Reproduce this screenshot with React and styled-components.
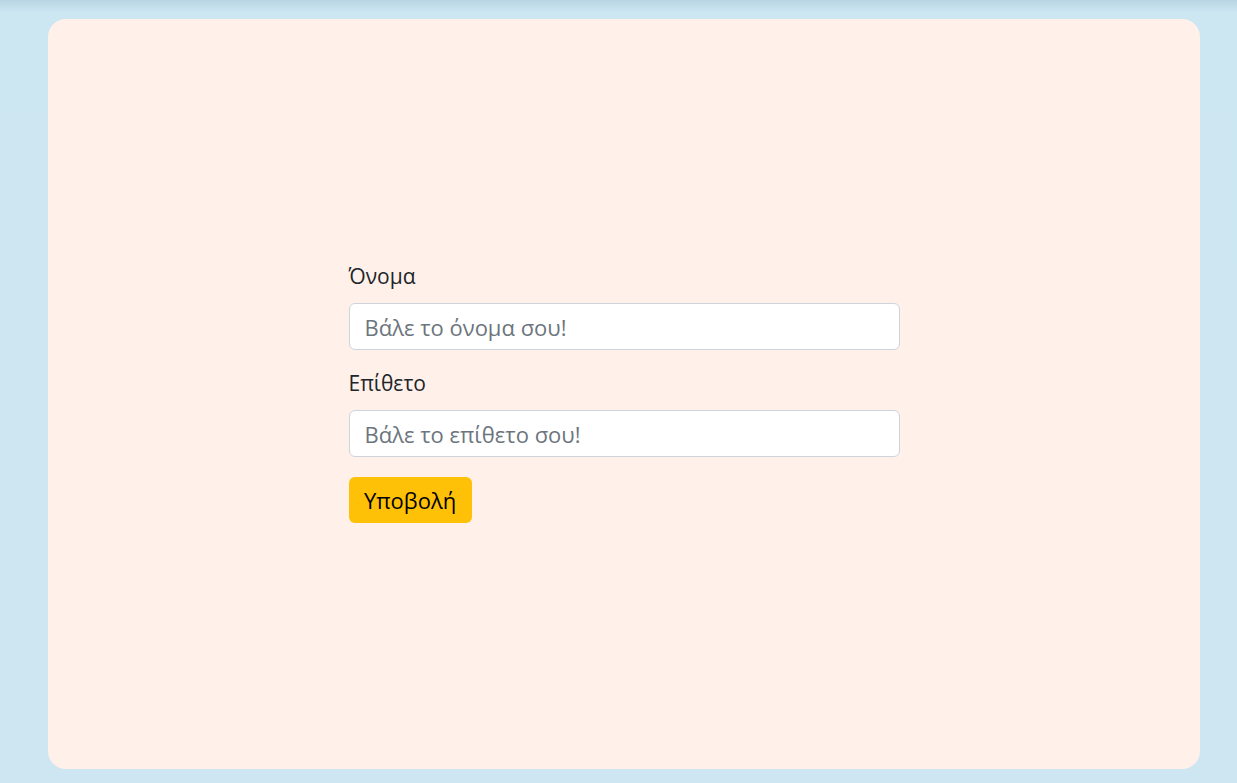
import React from "react";
import styled, { createGlobalStyle } from "styled-components";

const GlobalStyle = createGlobalStyle`
  html, body { margin: 0; padding: 0; }
  body {
    min-height: 783px;
    background: linear-gradient(to bottom, #b9d5e3 0px, #cce6f2 12px, #cde6f2 100%);
    font-family: "Open Sans", "Noto Sans", sans-serif;
    color: #212529;
  }
  * { box-sizing: border-box; }
`;

const Page = styled.div`
  padding: 19px 37px 14px 48px;
`;

const Card = styled.main`
  height: 750px;
  background: #fff1e9;
  border-radius: 18px;
  display: flex;
  align-items: center;
  justify-content: center;
`;

const Form = styled.form`
  width: 551px;
  display: flex;
  flex-direction: column;
  padding-bottom: 2px;
`;

const Group = styled.div`
  display: flex;
  flex-direction: column;
  margin-bottom: 20px;
`;

const Label = styled.label`
  font-size: 21px;
  line-height: 26px;
  margin-bottom: 14px;
  color: #212529;
`;

const Input = styled.input`
  height: 47px;
  padding: 0 15px;
  font-family: inherit;
  font-size: 22px;
  color: #212529;
  background: #fff;
  border: 1px solid #ced4da;
  border-radius: 6px;
  outline: none;
  &::placeholder { color: #6c757d; }
`;

const Button = styled.button`
  align-self: flex-start;
  height: 46px;
  padding: 0 15.5px;
  font-family: inherit;
  font-size: 22px;
  color: #000;
  background: #ffc107;
  border: none;
  border-radius: 6px;
  cursor: pointer;
`;

export default function App() {
  return (
    <>
      <GlobalStyle />
      <Page>
        <Card>
          <Form onSubmit={(e) => e.preventDefault()}>
            <Group>
              <Label htmlFor="name">Όνομα</Label>
              <Input id="name" placeholder="Βάλε το όνομα σου!" />
            </Group>
            <Group>
              <Label htmlFor="surname">Επίθετο</Label>
              <Input id="surname" placeholder="Βάλε το επίθετο σου!" />
            </Group>
            <Button type="submit">Υποβολή</Button>
          </Form>
        </Card>
      </Page>
    </>
  );
}
